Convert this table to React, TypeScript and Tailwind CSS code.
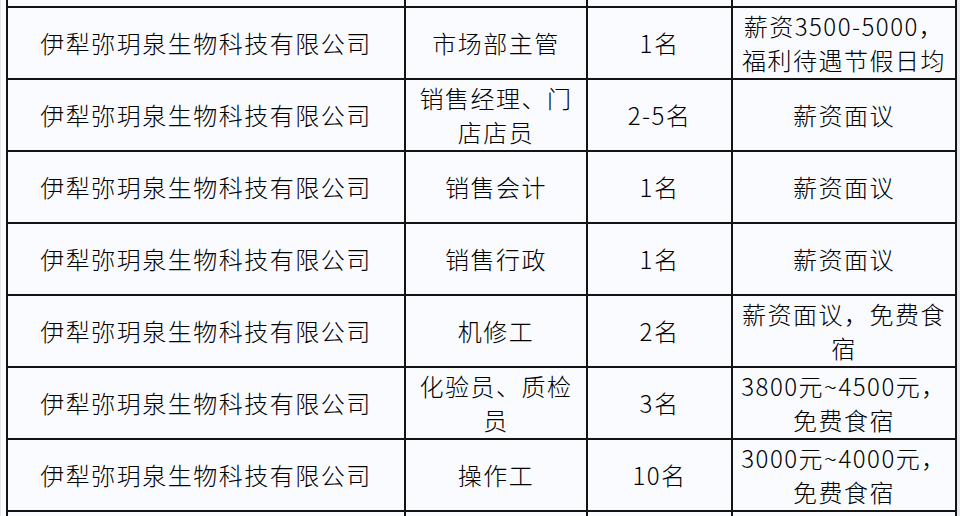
import React from "react";

type Row = { company: string; pos: React.ReactNode; num: string; pay: React.ReactNode };

const C = "伊犁弥玥泉生物科技有限公司";

const rows: Row[] = [
  {
    company: C,
    pos: "市场部主管",
    num: "1名",
    pay: (
      <>
        薪资3500-5000，
        <br />
        福利待遇节假日均
      </>
    ),
  },
  {
    company: C,
    pos: (
      <>
        销售经理、门
        <br />
        店店员
      </>
    ),
    num: "2-5名",
    pay: "薪资面议",
  },
  { company: C, pos: "销售会计", num: "1名", pay: "薪资面议" },
  { company: C, pos: "销售行政", num: "1名", pay: "薪资面议" },
  {
    company: C,
    pos: "机修工",
    num: "2名",
    pay: (
      <>
        薪资面议，免费食
        <br />
        宿
      </>
    ),
  },
  {
    company: C,
    pos: (
      <>
        化验员、质检
        <br />
        员
      </>
    ),
    num: "3名",
    pay: (
      <>
        3800元~4500元，
        <br />
        免费食宿
      </>
    ),
  },
  {
    company: C,
    pos: "操作工",
    num: "10名",
    pay: (
      <>
        3000元~4000元，
        <br />
        免费食宿
      </>
    ),
  },
];

function Cells({ row, h }: { row: Row | null; h: string }) {
  const base = `${h} flex items-center justify-center text-center border-b-2 border-r-2 border-[#141414] overflow-hidden`;
  return (
    <>
      <div className={`${base} border-l-2`}>{row?.company}</div>
      <div className={base}>{row?.pos}</div>
      <div className={base}>{row?.num}</div>
      <div className={base}>{row?.pay}</div>
    </>
  );
}

export default function App() {
  return (
    <div
      className="w-[960px] h-[516px] overflow-hidden bg-[#fafbfe] flex text-black text-[24px] leading-[34px] tracking-[1.5px] font-light"
      style={{ fontFamily: '"Noto Sans CJK SC", "Noto Sans", sans-serif' }}
    >
      <div className="w-[6px] h-full border-l border-[#e4e4ea] shrink-0" />
      <div className="w-[951px] shrink-0 grid grid-cols-[400px_182px_145px_224px] content-start">
        <Cells row={null} h="h-[8px]" />
        {rows.map((r, i) => (
          <Cells key={i} row={r} h="h-[72px]" />
        ))}
        <Cells row={null} h="h-[8px]" />
      </div>
      <div className="w-[3px] h-full bg-[#e8e9ee] shrink-0" />
    </div>
  );
}
